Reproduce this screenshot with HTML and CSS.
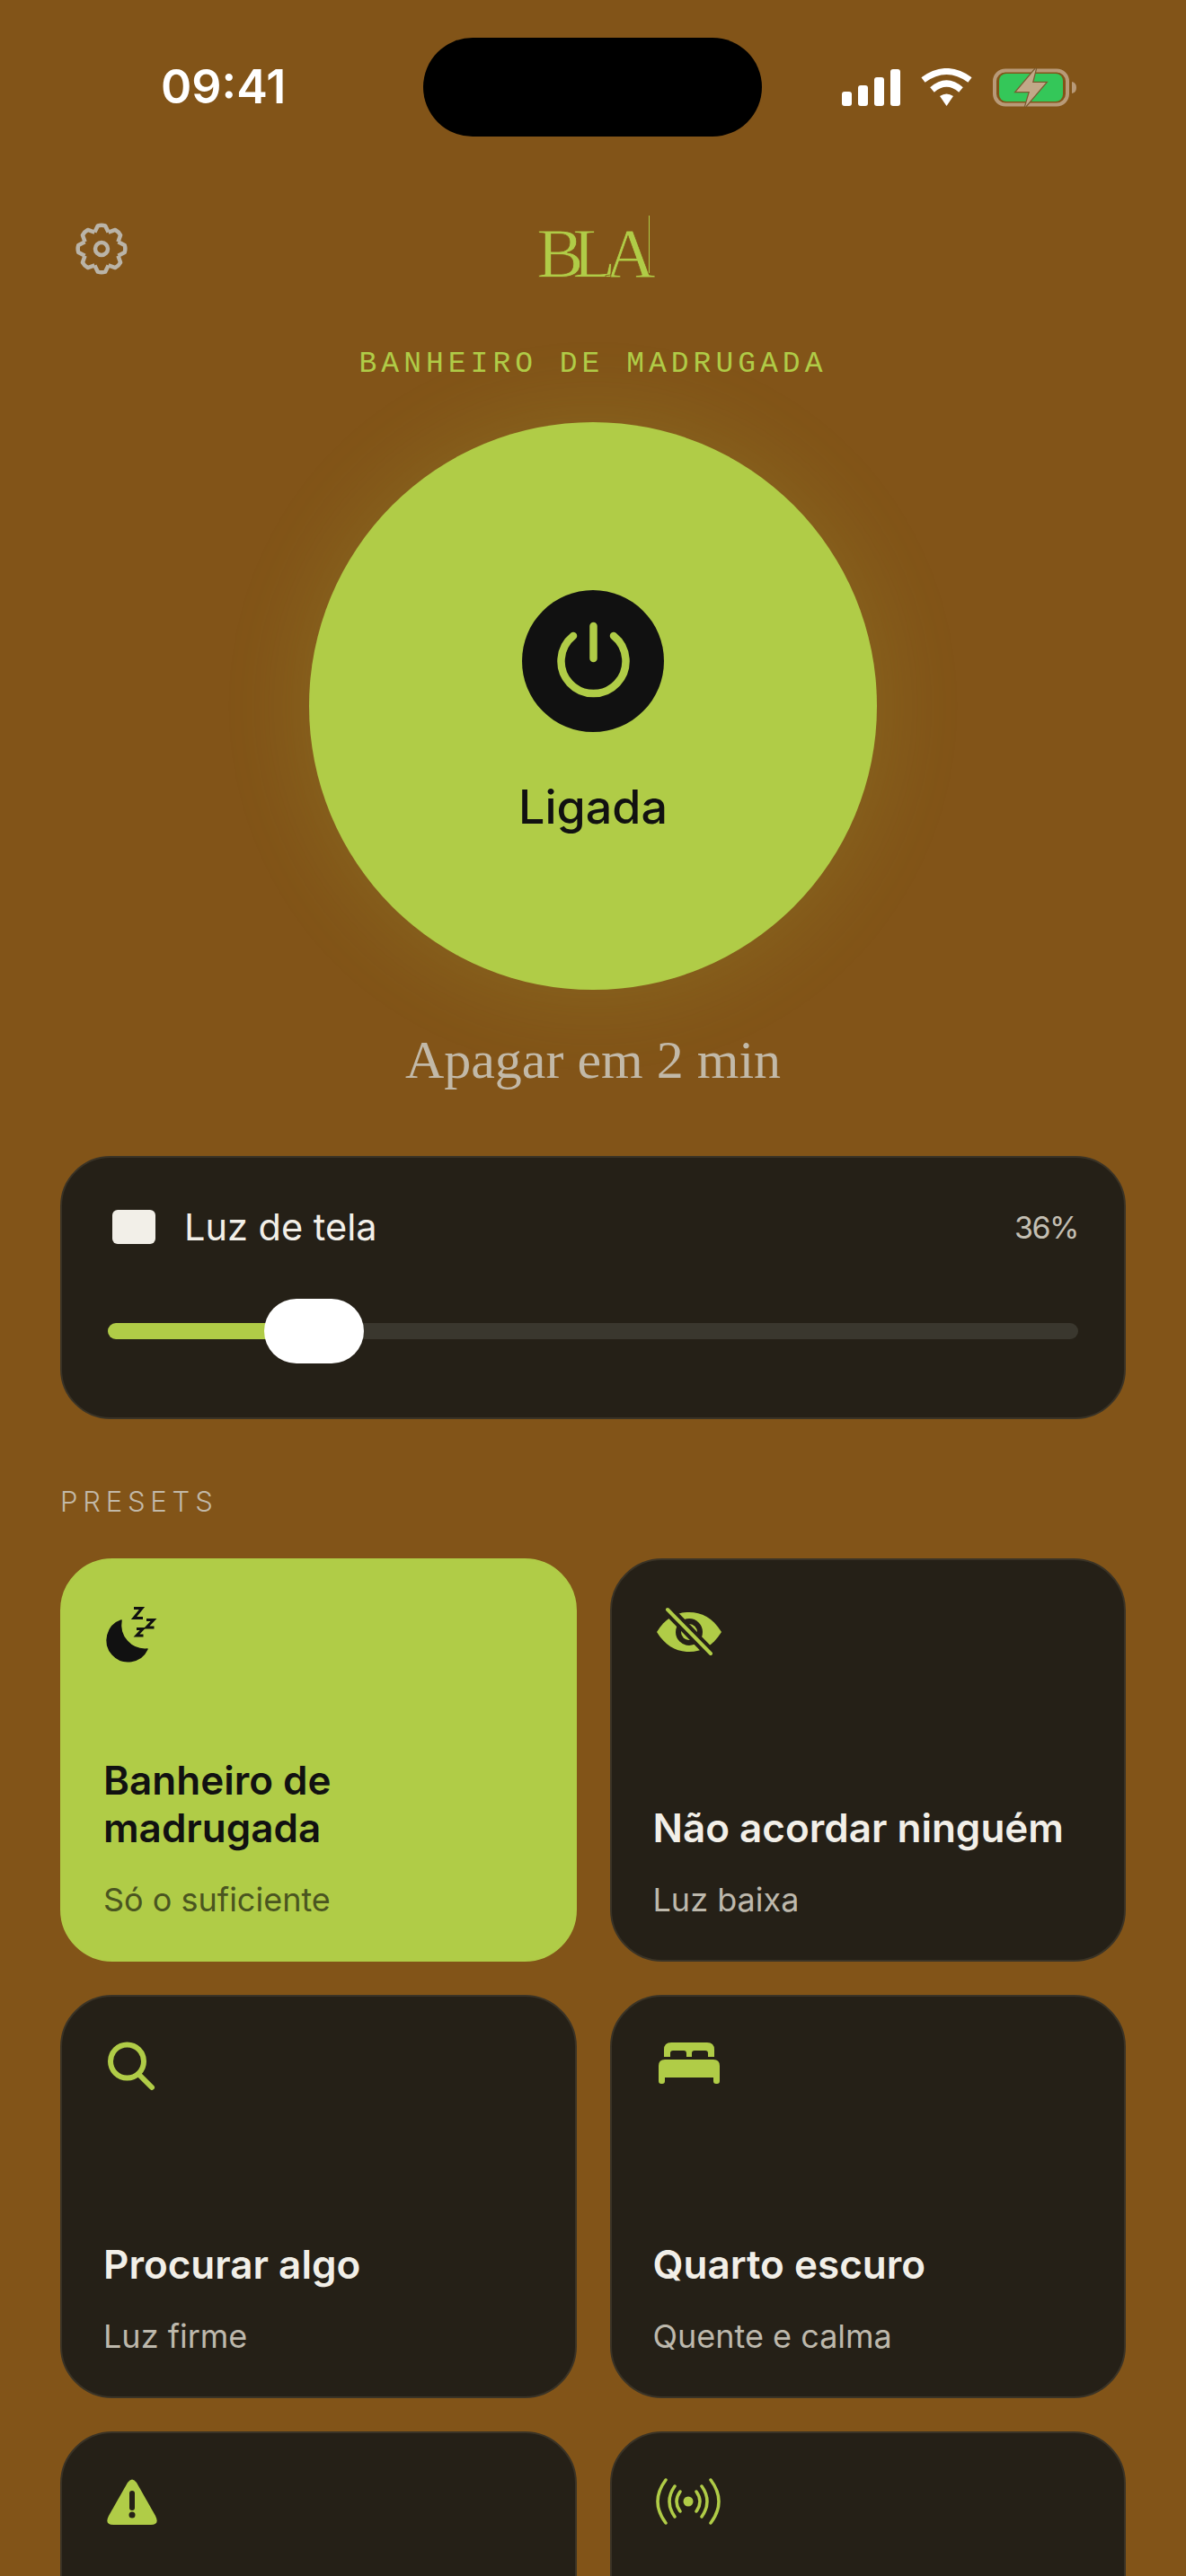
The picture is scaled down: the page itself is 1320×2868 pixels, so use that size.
FILE: index.html
```html
<!DOCTYPE html>
<html lang="pt-BR">

<head>
    <meta charset="UTF-8">
    <meta name="viewport" content="width=device-width, initial-scale=1.0">
    <title>BLA</title>
    <link rel="stylesheet" href="styles.css">
</head>

<body>
    <div class="status-bar">
        <span class="status-time">09:41</span>
        <div class="notch"></div>
        <div class="status-icons">
            <svg class="icon-signal" viewBox="0 0 65 41">
                <rect x="0" y="25" width="11" height="16" rx="3" />
                <rect x="18" y="18" width="11" height="23" rx="3" />
                <rect x="36" y="9" width="11" height="32" rx="3" />
                <rect x="54" y="0" width="11" height="41" rx="3" />
            </svg>
            <svg class="icon-wifi" viewBox="0 0 57 42">
                <path class="wifi-band" d="M2.5 13 Q28.5 -6 54.5 13" />
                <path class="wifi-band" d="M12.5 24 Q28.5 10 44.5 24" />
                <path d="M21 31 Q28.5 26 36 31 L28.5 42 Z" />
            </svg>
            <svg class="icon-battery" viewBox="0 0 93 43">
                <rect class="battery-shell" x="2" y="2.5" width="81" height="38" rx="12" />
                <rect class="battery-level" x="7" y="6" width="71" height="31" rx="8" />
                <path class="battery-nub" d="M88 15 Q93 16 93 21.5 Q93 27 88 28 Z" />
                <path class="battery-bolt" d="M48 0 L26 26 H41 L36 43 L59 16 H44 Z" />
            </svg>
        </div>
    </div>

    <div class="top-bar">
        <svg class="icon-gear" viewBox="0 0 58 58">
            <defs>
                <path id="gear-tooth" d="M21.35 10.52 L24.9 3.3 Q29 2 33.1 3.3 L36.65 10.52" />
            </defs>
            <use href="#gear-tooth" />
            <use href="#gear-tooth" transform="rotate(45 29 29)" />
            <use href="#gear-tooth" transform="rotate(90 29 29)" />
            <use href="#gear-tooth" transform="rotate(135 29 29)" />
            <use href="#gear-tooth" transform="rotate(180 29 29)" />
            <use href="#gear-tooth" transform="rotate(225 29 29)" />
            <use href="#gear-tooth" transform="rotate(270 29 29)" />
            <use href="#gear-tooth" transform="rotate(315 29 29)" />
            <circle cx="29" cy="29" r="7" />
        </svg>
        <div class="logo"><span class="logo-text">BLA</span></div>
    </div>

    <div class="mode-label">BANHEIRO DE MADRUGADA</div>

    <div class="power-button">
        <div class="power-badge">
            <svg class="icon-power" viewBox="0 0 158 158">
                <path d="M57 51 A36 36 0 1 0 102 51" />
                <path d="M79.5 40 V76" />
            </svg>
        </div>
        <span class="power-state">Ligada</span>
    </div>

    <div class="countdown">Apagar em 2 min</div>

    <div class="light-card">
        <div class="light-row">
            <span class="swatch"></span>
            <span class="light-name">Luz de tela</span>
            <span class="light-value">36%</span>
        </div>
        <div class="slider">
            <div class="slider-track">
                <div class="slider-fill" style="width: 20%"></div>
            </div>
            <div class="slider-thumb" style="left: 16.1%"></div>
        </div>
    </div>

    <div class="section-title">PRESETS</div>

    <div class="presets">
        <div class="preset active">
            <svg class="preset-icon" viewBox="0 0 72 68">
                <path class="icon-solid" d="M16 19 A23.5 23.5 0 1 0 45 51 A27 27 0 0 1 16 19 Z" />
                <path class="icon-zzz" d="M30 5.5 H39 L30 16.5 H40" />
                <path class="icon-zzz" d="M44 18.5 H52 L44 27 H52.5" />
                <path class="icon-zzz" d="M33 28.5 H40 L33 36 H40.5" />
            </svg>
            <div class="preset-title">Banheiro de madrugada</div>
            <div class="preset-sub">Só o suficiente</div>
        </div>

        <div class="preset">
            <svg class="preset-icon" viewBox="0 0 72 68">
                <path class="icon-fill" d="M0 32 C10 16 22 10 36 10 S62 16 72 32 C62 48 50 54 36 54 S10 48 0 32 Z" />
                <circle class="icon-cut" cx="36" cy="32" r="15" />
                <circle class="icon-fill" cx="36" cy="32" r="9" />
                <path class="icon-cut-wide" d="M12 7 L60 56" />
                <path class="icon-line-thin" d="M12 7 L60 56" />
            </svg>
            <div class="preset-title">Não acordar ninguém</div>
            <div class="preset-sub">Luz baixa</div>
        </div>

        <div class="preset">
            <svg class="preset-icon" viewBox="0 0 72 68">
                <circle class="icon-line" cx="22.5" cy="24" r="18.5" />
                <path class="icon-line" d="M36 39 L50 53" />
            </svg>
            <div class="preset-title">Procurar algo</div>
            <div class="preset-sub">Luz firme</div>
        </div>

        <div class="preset">
            <svg class="preset-icon" viewBox="0 0 72 68">
                <path class="icon-fill" d="M8 19 V11 Q8 3 16 3 H56 Q64 3 64 11 V19 H57 V15 Q57 12 54 12 H42 Q39 12 39 15 V19 H33 V15 Q33 12 30 12 H18 Q15 12 15 15 V19 Z" />
                <path class="icon-fill" d="M2 42 V29 Q2 22 9 22 H63 Q70 22 70 29 V46 Q70 49 67 49 H66 Q63 49 63 46 V42 H9 V46 Q9 49 6 49 H5 Q2 49 2 46 Z" />
            </svg>
            <div class="preset-title">Quarto escuro</div>
            <div class="preset-sub">Quente e calma</div>
        </div>

        <div class="preset">
            <svg class="preset-icon" viewBox="0 0 72 68">
                <path class="icon-fill" d="M23 7 Q28 0 33 7 L54 44 Q59 54 49 54 H7 Q-3 54 2 44 Z" />
                <path class="icon-cut-line" d="M28 19 V35" />
                <circle class="icon-cut" cx="28" cy="43" r="3.5" />
            </svg>
        </div>

        <div class="preset">
            <svg class="preset-icon" viewBox="0 0 72 68">
                <circle class="icon-fill" cx="35" cy="28" r="5.5" />
                <path class="icon-wave" d="M44 17 Q52 28 44 39 M50 11 Q62 28 50 45 M60 4 Q78 28 60 52" />
                <path class="icon-wave" d="M26 17 Q18 28 26 39 M20 11 Q8 28 20 45 M10 4 Q-8 28 10 52" />
            </svg>
        </div>
    </div>
</body>

</html>
```

FILE: styles.css
```css
html,
body {
    height: 2868px;
    overflow: hidden;
}

body {
    margin: 0;
    background: #825418;
    font-family: 'Inter', sans-serif;
    color: #f2efe8;
}

/* status bar */

.status-bar {
    display: grid;
    grid-template-columns: 471px 377px 1fr;
    height: 110px;
    padding-top: 42px;
}

.status-time {
    align-self: center;
    padding-left: 179px;
    font-size: 52px;
    font-weight: 600;
    line-height: 110px;
    color: white;
}

.notch {
    background: black;
    border-radius: 55px;
}

.status-icons {
    display: flex;
    align-items: center;
    padding-left: 89px;
}

.icon-signal {
    width: 65px;
    height: 41px;
    fill: white;
}

.icon-wifi {
    width: 57px;
    height: 42px;
    margin-left: 23px;
    fill: white;
}

.wifi-band {
    fill: none;
    stroke: white;
    stroke-width: 7;
}

.icon-battery {
    width: 93px;
    height: 43px;
    margin-left: 23px;
}

.battery-shell {
    fill: none;
    stroke: #b89a78;
    stroke-width: 4;
}

.battery-level {
    fill: #34c759;
}

.battery-nub {
    fill: #b89a78;
}

.battery-bolt {
    fill: #c2a888;
    stroke: #7a5a30;
    stroke-width: 2.5;
    paint-order: stroke;
}

/* header */

.top-bar {
    display: grid;
    grid-template-columns: 1fr auto 1fr;
    height: 65px;
    margin-top: 88px;
    padding: 0 84px;
}

.icon-gear {
    width: 58px;
    height: 58px;
    margin-top: 8px;
    fill: none;
    stroke: #bab4a8;
    stroke-width: 4.5;
    stroke-linejoin: round;
}

.logo {
    grid-column: 2;
    display: flex;
    align-items: flex-end;
    height: 64px;
    border-right: 1px solid #b0cc47;
}

.logo-text {
    display: block;
    width: 124px;
    font-family: 'Liberation Serif', serif;
    font-size: 78px;
    line-height: 64px;
    letter-spacing: -12px;
    color: #b0cc47;
    white-space: nowrap;
    -webkit-text-stroke: 0.8px #825418;
    transform: translateY(10px);
}

.mode-label {
    margin-top: 81px;
    font-family: 'Liberation Mono', monospace;
    font-size: 33px;
    line-height: 40px;
    letter-spacing: 5px;
    text-align: center;
    color: #b0cc47;
}

/* power button */

.power-button {
    display: flex;
    flex-direction: column;
    align-items: center;
    box-sizing: border-box;
    width: 632px;
    height: 632px;
    margin: 44px auto 0;
    padding-top: 187px;
    background: #b0cc47;
    border-radius: 50%;
    box-shadow: 0 0 90px 10px rgba(176, 204, 71, 0.14);
}

.power-badge {
    width: 158px;
    height: 158px;
    background: #111111;
    border-radius: 50%;
}

.icon-power {
    display: block;
    width: 158px;
    height: 158px;
    fill: none;
    stroke: #b0cc47;
    stroke-width: 8.5;
    stroke-linecap: round;
}

.power-state {
    margin-top: 52px;
    font-size: 52px;
    font-weight: 500;
    line-height: 64px;
    color: #111111;
}

.countdown {
    margin-top: 44px;
    font-family: 'Liberation Serif', serif;
    font-size: 60px;
    line-height: 68px;
    text-align: center;
    color: #c2b9a8;
}

/* slider card */

.light-card {
    box-sizing: border-box;
    height: 293px;
    margin: 73px 67px 0;
    padding: 53px 51px;
    background: #252017;
    border: 2px solid #3a3326;
    border-radius: 56px;
}

.light-row {
    display: flex;
    align-items: center;
    height: 48px;
    padding-left: 5px;
}

.swatch {
    width: 48px;
    height: 38px;
    background: #f2efe8;
    border-radius: 6px;
}

.light-name {
    margin-left: 32px;
    font-size: 41.5px;
    line-height: 48px;
}

.light-value {
    margin-left: auto;
    font-size: 34px;
    letter-spacing: -1.5px;
    color: #c4bfb3;
}

.slider {
    position: relative;
    display: flex;
    align-items: center;
    height: 72px;
    margin-top: 56px;
}

.slider-track {
    width: 100%;
    height: 18px;
    background: #3a372e;
    border-radius: 9px;
}

.slider-fill {
    height: 18px;
    background: #b0cc47;
    border-radius: 9px;
}

.slider-thumb {
    position: absolute;
    top: 0;
    width: 111px;
    height: 72px;
    background: white;
    border-radius: 36px;
}

/* presets */

.section-title {
    margin: 72px 67px 43px;
    font-size: 31px;
    font-weight: 300;
    line-height: 40px;
    letter-spacing: 5.8px;
    color: #c2b9a8;
}

.presets {
    display: grid;
    grid-template-columns: 1fr 1fr;
    grid-auto-rows: 449px;
    gap: 37px;
    height: 1133px;
    padding: 0 67px;
    overflow: hidden;
}

.preset {
    display: flex;
    flex-direction: column;
    box-sizing: border-box;
    padding: 48px 46px 45px;
    background: #252017;
    border: 2px solid #3a3326;
    border-radius: 58px;
}

.preset.active {
    background: #b0cc47;
    border-color: #b0cc47;
    color: #111111;
}

.preset-icon {
    width: 72px;
    height: 68px;
    margin-left: 4px;
    overflow: visible;
}

.preset-title {
    margin-top: auto;
    font-size: 44px;
    font-weight: 600;
    line-height: 53px;
}

.preset-sub {
    margin-top: 31px;
    font-size: 36px;
    line-height: 44px;
    color: #bdb8ac;
}

.active .preset-sub {
    color: #4a5520;
}

.icon-fill {
    fill: #b0cc47;
}

.icon-cut {
    fill: #252017;
}

.icon-cut-line {
    fill: none;
    stroke: #252017;
    stroke-width: 6;
    stroke-linecap: round;
}

.icon-cut-wide {
    fill: none;
    stroke: #252017;
    stroke-width: 12;
}

.icon-line {
    fill: none;
    stroke: #b0cc47;
    stroke-width: 6;
    stroke-linecap: round;
}

.icon-line-thin {
    fill: none;
    stroke: #b0cc47;
    stroke-width: 4;
    stroke-linecap: round;
}

.icon-wave {
    fill: none;
    stroke: #b0cc47;
    stroke-width: 3.5;
    stroke-linecap: round;
}

.icon-solid {
    fill: #111111;
    stroke: #111111;
    stroke-width: 1.5;
    stroke-linejoin: round;
}

.icon-zzz {
    fill: none;
    stroke: #111111;
    stroke-width: 3;
}
```
